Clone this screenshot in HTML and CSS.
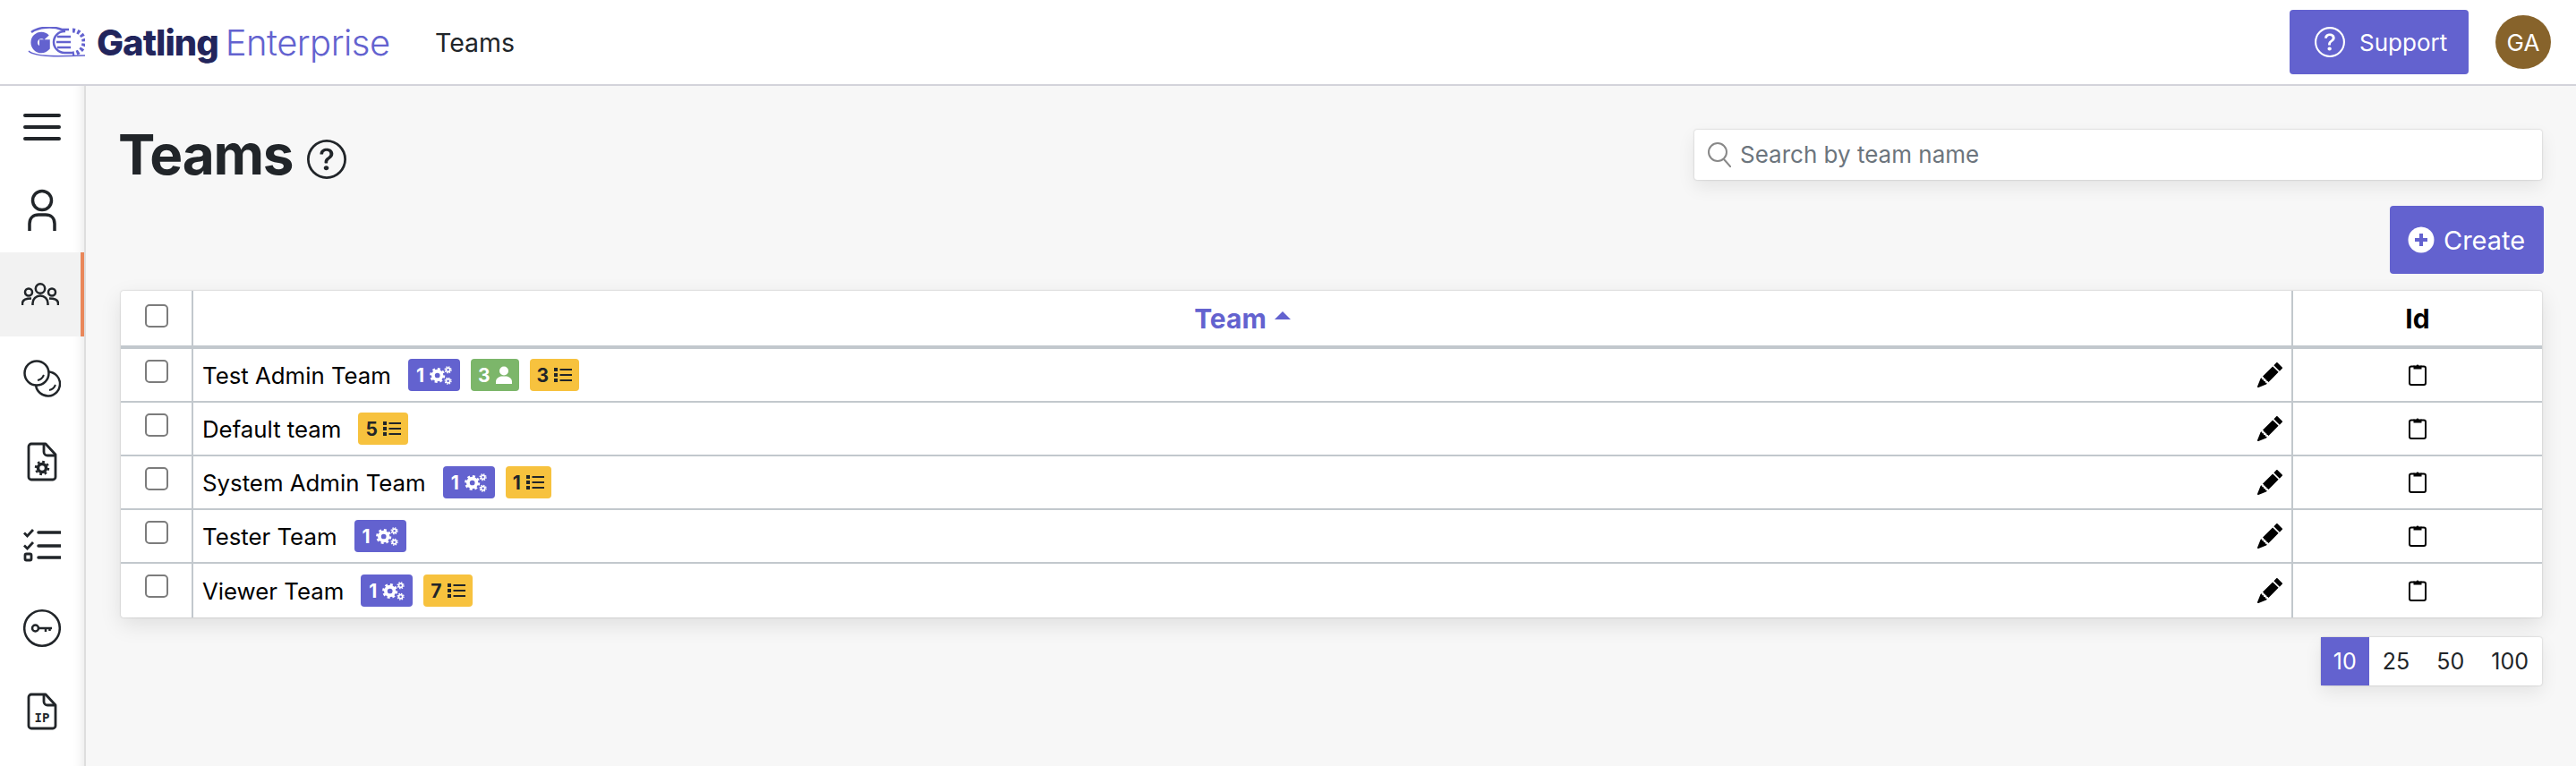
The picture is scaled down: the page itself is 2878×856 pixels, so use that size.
FILE: index.html
```html
<!DOCTYPE html>
<html lang="en">
<head>
    <meta charset="UTF-8">
    <title>Teams - Gatling Enterprise</title>
    <link rel="stylesheet" href="styles.css">
</head>
<body>
    <!-- Shared icons -->
    <svg class="sprite" xmlns="http://www.w3.org/2000/svg">
        <symbol id="i-help" viewBox="0 0 16 16">
            <path d="M8 15A7 7 0 1 1 8 1a7 7 0 0 1 0 14zm0 1A8 8 0 1 0 8 0a8 8 0 0 0 0 16z"/>
            <path d="M5.255 5.786a.237.237 0 0 0 .241.247h.825c.138 0 .248-.113.266-.25.09-.656.54-1.134 1.342-1.134.686 0 1.314.343 1.314 1.168 0 .635-.374.927-.965 1.371-.673.489-1.206 1.06-1.168 1.987l.003.217a.25.25 0 0 0 .25.246h.811a.25.25 0 0 0 .25-.25v-.105c0-.718.273-.927 1.01-1.486.609-.463 1.244-.977 1.244-2.056 0-1.511-1.276-2.241-2.673-2.241-1.267 0-2.655.59-2.75 2.286zm1.557 5.763c0 .533.425.927 1.01.927.609 0 1.028-.394 1.028-.927 0-.552-.42-.94-1.029-.94-.584 0-1.009.388-1.009.94z"/>
        </symbol>
        <symbol id="i-pencil" viewBox="0 0 16 16">
            <path d="M12.854.146a.5.5 0 0 0-.707 0L10.5 1.793 14.207 5.5l1.647-1.646a.5.5 0 0 0 0-.708l-3-3zm.646 6.061L9.793 2.5 3.293 9H3.5a.5.5 0 0 1 .5.5v.5h.5a.5.5 0 0 1 .5.5v.5h.5a.5.5 0 0 1 .5.5v.5h.5a.5.5 0 0 1 .5.5v.207l6.5-6.5zm-7.468 7.468A.5.5 0 0 1 6 13.5V13h-.5a.5.5 0 0 1-.5-.5V12h-.5a.5.5 0 0 1-.5-.5V11h-.5a.5.5 0 0 1-.5-.5V10h-.5a.499.499 0 0 1-.175-.032l-.179.178a.5.5 0 0 0-.11.168l-2 5a.5.5 0 0 0 .65.65l5-2a.5.5 0 0 0 .168-.11l.178-.178z"/>
        </symbol>
        <symbol id="i-clipboard" viewBox="0 0 20 26">
            <path d="M6.500 4.500H3a2 2 0 0 0-2 2V23a2 2 0 0 0 2 2h14a2 2 0 0 0 2-2V6.500a2 2 0 0 0-2-2h-3.500" fill="none" stroke="#000" stroke-width="2"/>
            <path d="M5.500 3.500h3a1.600 1.600 0 0 1 3 0h3v4h-9z"/>
        </symbol>
        <symbol id="i-gears" viewBox="0 0 26 22">
            <circle cx="9" cy="11" r="5" fill="none" stroke="#fff" stroke-width="4"/>
            <circle cx="9" cy="11" r="7.500" fill="none" stroke="#fff" stroke-width="3" stroke-dasharray="3 2.890"/>
            <circle cx="21.500" cy="4.500" r="2.200" fill="none" stroke="#fff" stroke-width="1.800"/>
            <circle cx="21.500" cy="4.500" r="3.600" fill="none" stroke="#fff" stroke-width="1.400" stroke-dasharray="1.500 1.330"/>
            <circle cx="21.500" cy="17.500" r="2.200" fill="none" stroke="#fff" stroke-width="1.800"/>
            <circle cx="21.500" cy="17.500" r="3.600" fill="none" stroke="#fff" stroke-width="1.400" stroke-dasharray="1.500 1.330"/>
        </symbol>
        <symbol id="i-user" viewBox="0 0 18 20">
            <circle cx="9" cy="5.500" r="5"/>
            <path d="M0 20v-2.500C0 14 3.500 11.500 7 11.500h4c3.500 0 7 2.500 7 6V20z"/>
        </symbol>
        <symbol id="i-list" viewBox="0 0 20 18">
            <path d="M0 1h4v4H0zM0 7h4v4H0zM0 13h4v4H0zM6.500 2h13.500v2H6.500zM6.500 8h13.500v2H6.500zM6.500 14h13.500v2H6.500z"/>
        </symbol>
    </svg>

    <header class="topbar">
        <a class="brand">
            <svg class="brand-mark" viewBox="0 0 64 34" fill="none" stroke="#6362cf">
                <path d="M4 6C12 0 28 -1 38 3H46" stroke-width="2.500"/>
                <path d="M21 12A8 8 0 1 0 21 23V18H13" stroke-width="7.500"/>
                <path d="M42 5H41A12 12 0 0 0 41 29H50" stroke-width="2.500"/>
                <path d="M33 11H48M32 17H48M33 23H48" stroke-width="2.500"/>
                <path d="M50 4A13 13 0 0 1 50 30" stroke-width="5" stroke-dasharray="3 2.500"/>
                <path d="M1 27C8 34 36 33 64 32" stroke-width="1.500"/>
            </svg>
            <span class="brand-name">Gatling</span>
            <span class="brand-product">Enterprise</span>
        </a>
        <span class="topbar-title">Teams</span>
        <a class="support-btn">
            <svg class="support-icon"><use href="#i-help"/></svg>
            Support
        </a>
        <span class="avatar">GA</span>
    </header>

    <div class="layout">
        <nav class="sidebar">
            <div class="side-item side-toggle">
                <svg width="42" height="30" viewBox="0 0 42 30" fill="none" stroke="#212529" stroke-width="4" stroke-linecap="round">
                    <path d="M2 2H40M2 15H40M2 28H40"/>
                </svg>
            </div>
            <div class="side-item side-tall">
                <svg width="34" height="48" viewBox="0 0 34 48" fill="none" stroke="#212529" stroke-width="3.500">
                    <circle cx="17" cy="13" r="10.500"/>
                    <path d="M3 47V39C3 33 7 29 13 29H21C27 29 31 33 31 39V47"/>
                </svg>
            </div>
            <div class="side-item side-tall side-item-active">
                <svg width="42" height="26" viewBox="0 0 42 26" fill="none" stroke="#212529" stroke-width="2.500">
                    <circle cx="21" cy="6.500" r="5.200"/>
                    <circle cx="8" cy="10.500" r="4"/>
                    <circle cx="34" cy="10.500" r="4"/>
                    <path d="M12.500 25V23A8.500 8.500 0 0 1 29.500 23V25"/>
                    <path d="M1 25V23C1 19 5 17.500 11 17.500"/>
                    <path d="M41 25V23C41 19 37 17.500 31 17.500"/>
                </svg>
            </div>
            <div class="side-item">
                <svg width="42" height="42" viewBox="0 0 42 42" fill="none" stroke="#212529" stroke-width="2.500">
                    <circle cx="15" cy="15" r="13.500"/>
                    <path d="M28.400 13.500A13.500 13.500 0 1 1 14.100 28.500"/>
                    <path d="M16 23C19 22.500 21.500 20.500 23 17M29 34C32 33.500 34.500 31.500 36 28" stroke-width="2"/>
                </svg>
            </div>
            <div class="side-item">
                <svg width="34" height="44" viewBox="0 0 34 44" fill="none" stroke="#212529" stroke-width="2.800" stroke-linejoin="round">
                    <path d="M21 2H5A3 3 0 0 0 2 5V39A3 3 0 0 0 5 42H29A3 3 0 0 0 32 39V14Z"/>
                    <path d="M19 2V11A4 4 0 0 0 23 15H32"/>
                    <circle cx="17" cy="29" r="4.500" stroke-width="3.500"/>
                    <circle cx="17" cy="29" r="7" stroke-width="2.500" stroke-dasharray="2.700 2.800"/>
                </svg>
            </div>
            <div class="side-item">
                <svg width="42" height="38" viewBox="0 0 42 38" fill="none" stroke="#212529" stroke-width="2.800">
                    <path d="M1 5.500L4.500 9L11 2M1 19.500L4.500 23L11 16"/>
                    <rect x="2" y="29" width="7" height="7" rx="1.500"/>
                    <path d="M17 5H42M17 20H42M17 33H42" stroke-width="3.500" stroke-linecap="round"/>
                </svg>
            </div>
            <div class="side-item">
                <svg width="42" height="44" viewBox="0 0 42 44" fill="none" stroke="#212529" stroke-width="2.500">
                    <circle cx="21" cy="22" r="19.800"/>
                    <circle cx="13.500" cy="22" r="3.500"/>
                    <path d="M17 22H32M25 22V26M29.500 22V25"/>
                </svg>
            </div>
            <div class="side-item">
                <svg width="34" height="42" viewBox="0 0 34 42" fill="none" stroke="#212529" stroke-width="2.800" stroke-linejoin="round">
                    <path d="M21 2H5A3 3 0 0 0 2 5V37A3 3 0 0 0 5 40H29A3 3 0 0 0 32 37V14Z"/>
                    <path d="M19 2V10A4 4 0 0 0 23 14H32"/>
                    <text class="ip-label" x="17" y="33" text-anchor="middle">IP</text>
                </svg>
            </div>
        </nav>

        <main class="content">
            <div class="title-row">
                <h1>Teams</h1>
                <svg class="title-help"><use href="#i-help"/></svg>
                <div class="search-box">
                    <svg width="26" height="28" viewBox="0 0 26 28" fill="none" stroke="#888" stroke-width="2">
                        <circle cx="11" cy="11" r="10"/>
                        <path d="M18 19L26 28"/>
                    </svg>
                    <input type="text" placeholder="Search by team name">
                </div>
            </div>

            <div class="action-row">
                <a class="create-btn">
                    <svg width="30" height="30" viewBox="0 0 30 30">
                        <circle cx="15" cy="15" r="14.500" fill="#fff"/>
                        <path d="M15 8V22M8 15H22" stroke="#6362cf" stroke-width="4"/>
                    </svg>
                    Create
                </a>
            </div>

            <table class="team-table">
                <thead>
                    <tr>
                        <th class="col-check"><span class="check check-head"></span></th>
                        <th class="col-team">
                            <span class="sort-link">Team <i class="sort-caret"></i></span>
                        </th>
                        <th class="col-id">Id</th>
                    </tr>
                </thead>
                <tbody>
                    <tr>
                        <td class="col-check"><span class="check"></span></td>
                        <td class="col-team">
                            <div class="team-cell">
                                <span class="team-name">Test Admin Team</span>
                                <span class="badge badge-purple">1 <svg class="ic-gears"><use href="#i-gears"/></svg></span>
                                <span class="badge badge-green">3 <svg class="ic-user"><use href="#i-user"/></svg></span>
                                <span class="badge badge-yellow">3 <svg class="ic-list"><use href="#i-list"/></svg></span>
                                <svg class="edit-icon"><use href="#i-pencil"/></svg>
                            </div>
                        </td>
                        <td class="col-id"><svg class="copy-icon"><use href="#i-clipboard"/></svg></td>
                    </tr>
                    <tr>
                        <td class="col-check"><span class="check"></span></td>
                        <td class="col-team">
                            <div class="team-cell">
                                <span class="team-name">Default team</span>
                                <span class="badge badge-yellow">5 <svg class="ic-list"><use href="#i-list"/></svg></span>
                                <svg class="edit-icon"><use href="#i-pencil"/></svg>
                            </div>
                        </td>
                        <td class="col-id"><svg class="copy-icon"><use href="#i-clipboard"/></svg></td>
                    </tr>
                    <tr>
                        <td class="col-check"><span class="check"></span></td>
                        <td class="col-team">
                            <div class="team-cell">
                                <span class="team-name">System Admin Team</span>
                                <span class="badge badge-purple">1 <svg class="ic-gears"><use href="#i-gears"/></svg></span>
                                <span class="badge badge-yellow">1 <svg class="ic-list"><use href="#i-list"/></svg></span>
                                <svg class="edit-icon"><use href="#i-pencil"/></svg>
                            </div>
                        </td>
                        <td class="col-id"><svg class="copy-icon"><use href="#i-clipboard"/></svg></td>
                    </tr>
                    <tr>
                        <td class="col-check"><span class="check"></span></td>
                        <td class="col-team">
                            <div class="team-cell">
                                <span class="team-name">Tester Team</span>
                                <span class="badge badge-purple">1 <svg class="ic-gears"><use href="#i-gears"/></svg></span>
                                <svg class="edit-icon"><use href="#i-pencil"/></svg>
                            </div>
                        </td>
                        <td class="col-id"><svg class="copy-icon"><use href="#i-clipboard"/></svg></td>
                    </tr>
                    <tr>
                        <td class="col-check"><span class="check"></span></td>
                        <td class="col-team">
                            <div class="team-cell">
                                <span class="team-name">Viewer Team</span>
                                <span class="badge badge-purple">1 <svg class="ic-gears"><use href="#i-gears"/></svg></span>
                                <span class="badge badge-yellow">7 <svg class="ic-list"><use href="#i-list"/></svg></span>
                                <svg class="edit-icon"><use href="#i-pencil"/></svg>
                            </div>
                        </td>
                        <td class="col-id"><svg class="copy-icon"><use href="#i-clipboard"/></svg></td>
                    </tr>
                </tbody>
            </table>

            <div class="pager-row">
                <div class="pager">
                    <span class="pager-item pager-active">10</span>
                    <span class="pager-item">25</span>
                    <span class="pager-item">50</span>
                    <span class="pager-item">100</span>
                </div>
            </div>
        </main>
    </div>
</body>
</html>
```

FILE: styles.css
```css
* {
    box-sizing: border-box;
}
body {
    margin: 0;
    height: 856px;
    overflow: hidden;
    font-family: Inter, "Liberation Sans", sans-serif;
    color: #212529;
    background-color: #f7f7f7;
}
.sprite {
    display: none;
}

/* Top bar */
.topbar {
    display: flex;
    align-items: center;
    height: 96px;
    padding: 0 28px 0 31px;
    background-color: #fff;
    border-bottom: 2px solid #d3d3da;
}
.brand {
    display: flex;
    align-items: center;
    width: 455px;
}
.brand-mark {
    width: 64px;
    height: 34px;
    margin-right: 13px;
}
.brand-name {
    font-size: 40px;
    font-weight: 800;
    letter-spacing: -1px;
    color: #22255c;
}
.brand-product {
    margin-left: 8px;
    font-size: 40px;
    font-weight: 300;
    letter-spacing: -0.5px;
    color: #6362cf;
}
.topbar-title {
    flex: 1;
    font-size: 28.500px;
}
.support-btn {
    display: flex;
    align-items: center;
    gap: 16px;
    width: 200px;
    height: 72px;
    padding-left: 28px;
    font-size: 26px;
    color: #fff;
    background-color: #6362cf;
    border-radius: 4px;
}
.support-icon {
    width: 34px;
    height: 34px;
    fill: #fff;
}
.avatar {
    display: flex;
    align-items: center;
    justify-content: center;
    width: 62px;
    height: 60px;
    margin-left: 30px;
    font-size: 26px;
    color: #fff;
    background-color: #87632b;
    border-radius: 50%;
}

/* Layout */
.layout {
    display: flex;
    height: 760px;
}
.sidebar {
    width: 96px;
    flex-shrink: 0;
    background-color: #fff;
    border-right: 2px solid #dedede;
    box-shadow: inset -14px 0 14px -14px rgba(0, 0, 0, 0.12);
}
.side-item {
    display: flex;
    align-items: center;
    justify-content: center;
    height: 93px;
}
.side-toggle {
    height: 92px;
}
.side-tall {
    height: 94px;
}
.side-item-active {
    background-color: #f2f2f2;
    border-right: 4px solid #e9875a;
}
.ip-label {
    font-family: "DejaVu Sans Mono", monospace;
    font-size: 14px;
    font-weight: 700;
    fill: #212529;
    stroke: none;
}

/* Content */
.content {
    flex: 1;
    padding: 38px 38px 0 39px;
}
.title-row {
    display: flex;
    align-items: center;
    height: 77px;
}
h1 {
    margin: 0 0 0 -3px;
    font-size: 62px;
    line-height: 77px;
    font-weight: 700;
    letter-spacing: -1.200px;
}
.title-help {
    width: 44px;
    height: 44px;
    margin: 10px 0 0 16px;
    fill: #212529;
}
.search-box {
    display: flex;
    align-items: center;
    gap: 10px;
    width: 947px;
    height: 56px;
    margin-left: auto;
    padding-left: 15px;
    background-color: #fff;
    border-radius: 3px;
    box-shadow: 0 0 2px rgba(0, 0, 0, 0.25), 0 8px 20px rgba(0, 0, 0, 0.08);
}
.search-box input {
    flex: 1;
    border: none;
    outline: none;
    padding: 0;
    font-family: inherit;
    font-size: 26px;
    background: transparent;
}
.search-box input::placeholder {
    color: #6c757d;
    opacity: 1;
}
.action-row {
    display: flex;
    justify-content: flex-end;
    margin: 19px -2px 19px 0;
}
.create-btn {
    display: flex;
    align-items: center;
    gap: 10px;
    width: 172px;
    height: 76px;
    padding-left: 20px;
    font-size: 29px;
    color: #fff;
    background-color: #6362cf;
    border-radius: 4px;
}

/* Table */
.team-table {
    width: 100%;
    table-layout: fixed;
    border-collapse: separate;
    border-spacing: 0;
    background-color: #fff;
    border-radius: 3px;
    box-shadow: 0 0 2px rgba(0, 0, 0, 0.25), 0 8px 24px rgba(0, 0, 0, 0.1);
}
.team-table th {
    height: 65px;
    padding: 0;
    font-size: 30px;
    font-weight: 700;
    color: #000;
    border-bottom: 4px solid #c2c8cd;
}
.team-table td {
    height: 60px;
    padding: 0;
    font-size: 25.800px;
    color: #000;
    border-bottom: 2px solid #c2c8cd;
}
.team-table tbody tr:last-child td {
    border-bottom: none;
}
.col-check {
    width: 81px;
    text-align: center;
    vertical-align: top;
    border-right: 2px solid #c2c8cd;
}
.col-team {
    border-right: 2px solid #c2c8cd;
}
.col-id {
    width: 278px;
    text-align: center;
}
.check {
    display: block;
    width: 26px;
    height: 26px;
    margin: 12px auto 0;
    background-color: #fff;
    border: 2px solid #7c7c7c;
    border-radius: 5px;
}
.check-head {
    margin-top: 15px;
}
.sort-link {
    color: #6362cf;
}
.sort-caret {
    display: inline-block;
    width: 0;
    height: 0;
    margin-left: 2px;
    vertical-align: 10px;
    border-left: 9px solid transparent;
    border-right: 9px solid transparent;
    border-bottom: 9px solid #6362cf;
}
.team-cell {
    display: flex;
    align-items: center;
    gap: 12px;
    padding: 0 10px 0 10px;
}
.team-name {
    margin-right: 7px;
}
.badge {
    display: inline-flex;
    align-items: center;
    justify-content: center;
    gap: 6px;
    height: 36px;
    padding: 0 8px;
    font-size: 21px;
    font-weight: 700;
    border-radius: 4px;
}
.badge-purple {
    padding: 0 9px;
    color: #fff;
    background-color: #6362cf;
}
.badge-green {
    color: #fff;
    background-color: #7cb66a;
}
.badge-yellow {
    color: #212529;
    background-color: #f7c23e;
}
.ic-gears {
    width: 25px;
    height: 21px;
}
.ic-user {
    width: 18px;
    height: 20px;
    fill: #fff;
}
.ic-list {
    width: 20px;
    height: 18px;
    fill: #212529;
}
.edit-icon {
    width: 28px;
    height: 28px;
    margin-left: auto;
    fill: #000;
}
.copy-icon {
    display: block;
    width: 20px;
    height: 26px;
    margin: -2px auto 0;
}

/* Page size */
.pager-row {
    display: flex;
    justify-content: flex-end;
    margin-top: 22px;
}
.pager {
    display: flex;
    align-items: center;
    height: 54px;
    background-color: #fff;
    border-radius: 3px;
    box-shadow: 0 0 2px rgba(0, 0, 0, 0.25), 0 8px 20px rgba(0, 0, 0, 0.08);
}
.pager-item {
    display: flex;
    align-items: center;
    justify-content: center;
    height: 100%;
    padding: 0 15px;
    font-size: 25px;
}
.pager-active {
    width: 54px;
    padding: 0;
    color: #fff;
    background-color: #6362cf;
}
```
